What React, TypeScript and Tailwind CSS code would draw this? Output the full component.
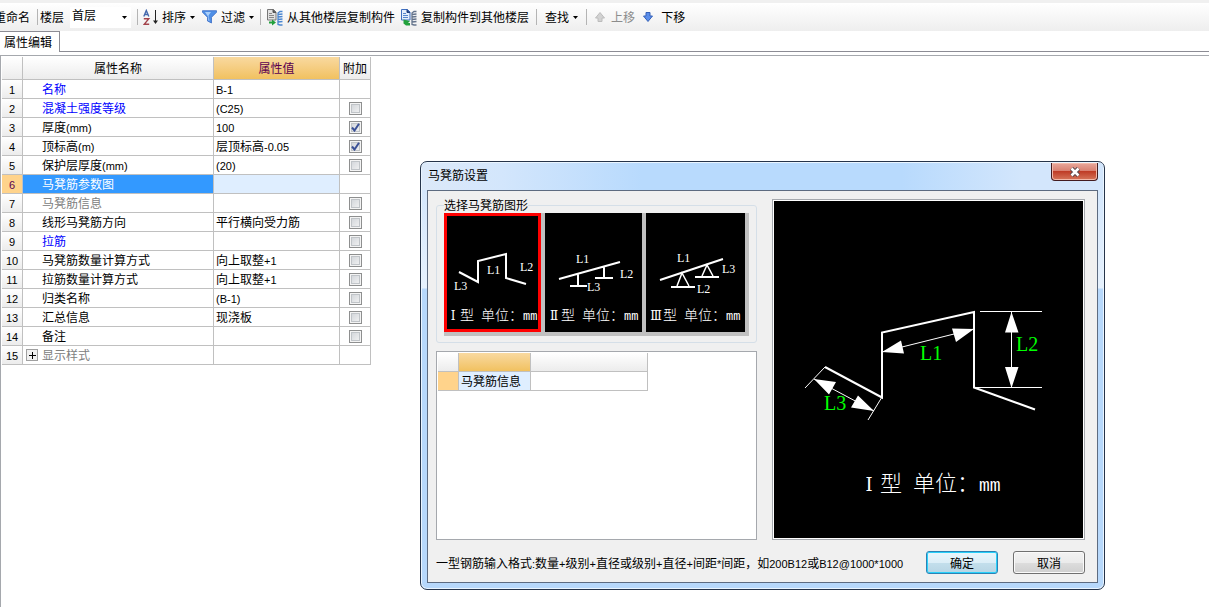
import { Fragment, type ReactNode } from 'react';
import clsx from 'clsx';

interface PropertyRow {
  name: string;
  value?: string;
  tone?: 'key' | 'muted' | 'selected';
  extra?: boolean; // undefined: no check box
  expandable?: boolean;
}

const ROWS: PropertyRow[] = [
  { name: '名称', value: 'B-1', tone: 'key' },
  { name: '混凝土强度等级', value: '(C25)', tone: 'key', extra: false },
  { name: '厚度(mm)', value: '100', extra: true },
  { name: '顶标高(m)', value: '层顶标高-0.05', extra: true },
  { name: '保护层厚度(mm)', value: '(20)', extra: false },
  { name: '马凳筋参数图', tone: 'selected' },
  { name: '马凳筋信息', tone: 'muted', extra: false },
  { name: '线形马凳筋方向', value: '平行横向受力筋', extra: false },
  { name: '拉筋', tone: 'key', extra: false },
  { name: '马凳筋数量计算方式', value: '向上取整+1', extra: false },
  { name: '拉筋数量计算方式', value: '向上取整+1', extra: false },
  { name: '归类名称', value: '(B-1)', extra: false },
  { name: '汇总信息', value: '现浇板', extra: false },
  { name: '备注', extra: false },
  { name: '显示样式', tone: 'muted', expandable: true },
];

// Latin runs are set a little smaller than the Chinese around them
function Mixed({ text }: { text: string }) {
  return (
    <>
      {text.split(/([\x21-\x7e]+)/).map((part, i) =>
        i % 2 ? (
          <span key={i} className="font-['Liberation_Sans',sans-serif] text-[11px] leading-none">
            {part}
          </span>
        ) : (
          <Fragment key={i}>{part}</Fragment>
        ),
      )}
    </>
  );
}

function Caret() {
  return (
    <svg width="5" height="3" viewBox="0 0 5 3" aria-hidden="true">
      <path d="M0 0h5L2.5 3z" fill="#000" />
    </svg>
  );
}

function Separator() {
  return <span className="h-4 w-px bg-[#b4b4b4]" />;
}

function SortIcon() {
  return (
    <svg width="15" height="17" viewBox="0 0 15 17" fill="none" aria-hidden="true">
      <path d="M.8 7.500 3.300 1.500 5.800 7.500M1.500 5.500h3.600" stroke="#4569ad" strokeWidth="1.400" />
      <path d="M.8 9.700h5L1.200 15.300h5" stroke="#a3434b" strokeWidth="1.400" />
      <path d="M12.500 1v12" stroke="#222" />
      <path d="M10 11.500h5l-2.500 3.500z" fill="#222" />
    </svg>
  );
}

function FilterIcon() {
  return (
    <svg width="15" height="14" viewBox="0 0 15 14" aria-hidden="true">
      <path d="M.5.7h14v1.600L9.500 7.300V13L5.500 11V7.300L.5 2.300z" fill="#4f8fe6" stroke="#3a6cc4" strokeWidth=".8" />
      <path d="M3 2h6L6.500 5.500 7.500 11 6.300 10.500V7z" fill="#a9cffa" />
    </svg>
  );
}

function CopyIcon({ variant }: { variant: 'from' | 'to' }) {
  const from = variant === 'from';
  return (
    <svg width="16" height="17" viewBox="0 0 16 17" fill="none" aria-hidden="true">
      <path d="M.5.500h6l2.500 2.500v8h-8.500z" fill={from ? '#e2e2e2' : '#e4eefc'} stroke={from ? '#777' : '#3f6fc0'} />
      <path d="M6 .500v3h3" fill={from ? '#555' : '#1f3f80'} stroke={from ? '#555' : '#1f3f80'} />
      <path d="M2 4.500h3M2 6.500h5M2 8.500h5" stroke={from ? '#888' : '#5585cc'} />
      <path
        d="M15.500 2.500H13l-2 1.500v11.500l2 .500h2.500M11 5.500l4.500-.500M11 8l4.500-.500M11 10.500l4.500-.500M11 13l4.500-.500"
        stroke={from ? '#4a86d0' : '#64748c'}
        strokeWidth="1.300"
      />
      <path d={from ? 'M2 12.500h3V10.500l4 3-4 3v-2H2z' : 'M2.500 10.500v4l2.500 2h4v-2.500H7l2-2z'} fill="#22a03c" />
    </svg>
  );
}

function MoveIcon({ down }: { down?: boolean }) {
  return (
    <svg width="10" height="10" viewBox="0 0 10 10" aria-hidden="true">
      {down ? (
        <path d="M3 .5h4V4h2.500L5 9.500.5 4H3z" fill="#5b8eea" stroke="#3561b8" />
      ) : (
        <path d="M3 9.500h4V6h2.500L5 .5.5 6H3z" fill="#d2d2d2" stroke="#bcbcbc" />
      )}
    </svg>
  );
}

function ToolButton({ children, disabled }: { children: ReactNode; disabled?: boolean }) {
  return (
    <button
      type="button"
      disabled={disabled}
      className="flex shrink-0 items-center gap-1 whitespace-nowrap disabled:text-[#8c8c8c]"
    >
      {children}
    </button>
  );
}

function Toolbar() {
  return (
    <header className="flex h-[31px] items-center border-t-3 border-[#f0f0f0] bg-linear-to-b from-white to-[#eeeeee]">
      <div className="-ml-1.5 flex items-center gap-[7px]">
        <ToolButton>重命名</ToolButton>
        <Separator />
      </div>
      <label htmlFor="floor" className="ml-0.5 shrink-0">
        楼层
      </label>
      <div className="relative mr-1.5 ml-1.5 shrink-0">
        <select id="floor" className="h-[21px] w-[61px] appearance-none bg-white pb-1 pl-0.5 leading-4">
          <option>首层</option>
        </select>
        <span className="pointer-events-none absolute top-[9px] right-1">
          <Caret />
        </span>
      </div>
      <div className="flex items-center gap-[5px]">
        <Separator />
        <ToolButton>
          <SortIcon />
          排序
          <Caret />
        </ToolButton>
      </div>
      <div className="ml-[7px] flex items-center gap-1.5">
        <ToolButton>
          <FilterIcon />
          过滤
          <Caret />
        </ToolButton>
        <Separator />
        <ToolButton>
          <CopyIcon variant="from" />
          从其他楼层复制构件
        </ToolButton>
        <ToolButton>
          <CopyIcon variant="to" />
          复制构件到其他楼层
        </ToolButton>
      </div>
      <div className="ml-[7px] flex items-center gap-2">
        <Separator />
        <ToolButton>
          查找
          <Caret />
        </ToolButton>
        <Separator />
        <ToolButton disabled>
          <MoveIcon />
          <span className="ml-0.5">上移</span>
        </ToolButton>
        <ToolButton>
          <MoveIcon down />
          <span className="ml-1">下移</span>
        </ToolButton>
      </div>
    </header>
  );
}

function CheckBox({ label, checked }: { label: string; checked: boolean }) {
  return (
    <span className="grid place-items-center">
      <input
        type="checkbox"
        aria-label={label}
        defaultChecked={checked}
        className="peer col-start-1 row-start-1 size-[13px] appearance-none border border-[#8e8f8f] bg-linear-to-br from-[#cdd1d6] to-[#f6f6f6] shadow-[inset_0_0_0_1px_#f4f4f4,inset_0_0_0_2px_#c0c4c8]"
      />
      <svg
        width="9"
        height="9"
        viewBox="0 0 9 9"
        className="pointer-events-none col-start-1 row-start-1 hidden peer-checked:block"
      >
        <path d="M1 4.500 3.500 7.500 8 .8" fill="none" stroke="#3b5196" strokeWidth="2" />
      </svg>
    </span>
  );
}

const CELL = 'border-r border-b border-[#c0c0c0] p-0';
const HEAD = 'bg-linear-to-b from-white to-[#ececec] font-normal';
const HEAD_ACTIVE = 'bg-linear-to-b from-[#f9d99f] to-[#f1c15f] font-normal';

function PropertyTable() {
  return (
    <table className="w-[369px] table-fixed border-separate border-spacing-0">
      <colgroup>
        <col className="w-[21px]" />
        <col className="w-[191px]" />
        <col className="w-[126px]" />
        <col className="w-[31px]" />
      </colgroup>
      <thead>
        <tr className="h-[23px]">
          <th className={clsx(CELL, HEAD)} />
          <th className={clsx(CELL, HEAD)}>属性名称</th>
          <th className={clsx(CELL, HEAD_ACTIVE, 'text-[#5a0050]')}>属性值</th>
          <th className={clsx(CELL, HEAD)}>附加</th>
        </tr>
      </thead>
      <tbody>
        {ROWS.map((row, i) => {
          const selected = row.tone === 'selected';
          return (
            <tr key={row.name} className="h-[19px]">
              <th
                scope="row"
                className={clsx(CELL, selected ? 'bg-[#ffd38b] font-normal text-[#5a0050]' : HEAD)}
              >
                <Mixed text={String(i + 1)} />
              </th>
              <td
                className={clsx(CELL, {
                  'text-[#0000ff]': row.tone === 'key',
                  'text-[#808080]': row.tone === 'muted',
                  'bg-[#3399ff] text-white': selected,
                })}
              >
                <div className={clsx('flex items-center', row.expandable ? 'gap-1 pl-[3px]' : 'pl-[19px]')}>
                  {row.expandable && (
                    <button
                      type="button"
                      aria-label="展开"
                      className="grid size-3 place-items-center border border-[#a0a0a0] bg-[#f0f0f0]"
                    >
                      <svg width="7" height="7" viewBox="0 0 7 7">
                        <path d="M0 3.500h7M3.500 0v7" stroke="#000" />
                      </svg>
                    </button>
                  )}
                  <span>
                    <Mixed text={row.name} />
                  </span>
                </div>
              </td>
              <td className={clsx(CELL, 'pl-0.5', selected && 'bg-[#dfeeff]')}>
                <Mixed text={row.value ?? ''} />
              </td>
              <td className={CELL}>
                {row.extra !== undefined && <CheckBox label={`附加 ${row.name}`} checked={row.extra} />}
              </td>
            </tr>
          );
        })}
      </tbody>
    </table>
  );
}

interface ShapeProps {
  label: string;
  numeral: string;
  viewBox: string;
  width: number;
  captionX: number;
  selected?: boolean;
  children: ReactNode;
}

function ShapeButton({ label, numeral, viewBox, width, captionX, selected, children }: ShapeProps) {
  return (
    <button
      type="button"
      aria-label={label}
      aria-pressed={!!selected}
      className={clsx('border-3 bg-black', selected ? 'border-[#ff0000]' : 'border-black')}
    >
      <svg width={width} height="113" viewBox={viewBox} className="overflow-visible" fill="none" stroke="#fff" strokeWidth="2">
        {children}
        <text
          x={captionX + 7}
          y="107"
          fill="#fff"
          stroke="none"
          textAnchor="middle"
          className="font-['DejaVu_Serif',serif] text-xs"
        >
          {numeral}
        </text>
        <text
          x={captionX + 14}
          y="107"
          fill="#fff"
          stroke="none"
          className="font-['Noto_Sans_CJK_SC',sans-serif] text-sm font-light"
        >
          型
          <tspan x={captionX + 35}>单位：</tspan>
          <tspan x={captionX + 77} className="font-['Liberation_Mono',monospace] text-xs">
            mm
          </tspan>
        </text>
      </svg>
    </button>
  );
}

function ShapeLabel({ x, y, children }: { x: number; y: number; children: ReactNode }) {
  return (
    <text x={x} y={y} fill="#fff" stroke="none" className="font-['Liberation_Serif',serif] text-xs">
      {children}
    </text>
  );
}

function ShapePicker() {
  return (
    <fieldset className="min-w-0 rounded-[3px] border border-[#d5dfe8] px-[7px] pb-1.5">
      <legend className="h-4 leading-4">选择马凳筋图形</legend>
      <div className="flex h-[123px] items-start gap-1 bg-[#c0c0c0]">
        <ShapeButton label="Ⅰ型" numeral="Ⅰ" width={91} viewBox="3 3 91 113" captionX={2} selected>
          <path d="M15 59 34 69V48l28-7v24l20 6" />
          <ShapeLabel x={43} y={61}>L1</ShapeLabel>
          <ShapeLabel x={76} y={58}>L2</ShapeLabel>
          <ShapeLabel x={10} y={77}>L3</ShapeLabel>
        </ShapeButton>
        <ShapeButton label="Ⅱ型" numeral="Ⅱ" width={91} viewBox="3 3 91 113" captionX={2}>
          <path d="M14 66 75 49M33 61v12M25 73h17M59 54v11M50 65h18" />
          <ShapeLabel x={31} y={50}>L1</ShapeLabel>
          <ShapeLabel x={75} y={65}>L2</ShapeLabel>
          <ShapeLabel x={42} y={78}>L3</ShapeLabel>
        </ShapeButton>
        <ShapeButton label="Ⅲ型" numeral="Ⅲ" width={93} viewBox="3 3 93 113" captionX={3}>
          <path d="M14 67 77 46M25 74h24M49 64h24" />
          <path d="M31 73 36 60 43 73M56 63 61 52 67 63" strokeWidth="1.500" />
          <ShapeLabel x={31} y={49}>L1</ShapeLabel>
          <ShapeLabel x={51} y={80}>L2</ShapeLabel>
          <ShapeLabel x={76} y={60}>L3</ShapeLabel>
        </ShapeButton>
      </div>
    </fieldset>
  );
}

function InfoTable() {
  return (
    <div className="mt-2 flex-1 border border-[#a5a8ad] bg-white p-px">
      <table className="w-[210px] table-fixed border-separate border-spacing-0">
        <colgroup>
          <col className="w-[21px]" />
          <col className="w-[72px]" />
          <col className="w-[117px]" />
        </colgroup>
        <thead>
          <tr className="h-[19px]">
            <th className={clsx(CELL, HEAD)} />
            <th className={clsx(CELL, HEAD_ACTIVE)} />
            <th className={clsx(CELL, HEAD)} />
          </tr>
        </thead>
        <tbody>
          <tr className="h-[19px]">
            <th className={clsx(CELL, 'bg-[#ffd38b]')} />
            <td className={clsx(CELL, 'bg-[#dfeeff] pl-0.5')}>马凳筋信息</td>
            <td className={CELL} />
          </tr>
        </tbody>
      </table>
    </div>
  );
}

function Preview() {
  return (
    <div className="mt-0.5 border border-[#a5a8ad] bg-white p-px">
      <svg width="309" height="337" viewBox="0 0 309 337" className="block bg-black" fill="none" stroke="#fff">
        <path d="M51 166 108 196.500V131.500L200 111V186.500L261 208.500" strokeWidth="2" />
        <path d="M51 166 31 187M108 196 94 219M206 110.500h62M200 186.500h68M237.500 111v75M108 151 200 128M40 178 100 210" />
        <g fill="#fff" stroke="none">
          <path d="M108 151 127 139.500 130 152.500zM200 128 178 127.500 182 141zM237.500 111 231 131.500h13.500zM237.500 187 231 166h13.500z" />
          <path d="M40 178 62 181 55 193.500zM100 210 84 194.500 77 206.500z" />
        </g>
        <g fill="#00ff00" stroke="none" className="font-['Liberation_Serif',serif] text-xl">
          <text x="146" y="159">L1</text>
          <text x="242" y="150">L2</text>
          <text x="50" y="209">L3</text>
        </g>
        <text x="95" y="290" fill="#fff" stroke="none" textAnchor="middle" className="font-['DejaVu_Serif',serif] text-lg">
          Ⅰ
        </text>
        <text x="106" y="290" fill="#fff" stroke="none" className="font-['Noto_Sans_CJK_SC',sans-serif] text-[22px] font-light">
          型
          <tspan x="139">单位：</tspan>
          <tspan x="205" className="font-['Liberation_Mono',monospace] text-lg">mm</tspan>
        </text>
      </svg>
    </div>
  );
}

function SettingsDialog() {
  return (
    <div
      role="dialog"
      aria-labelledby="dialog-title"
      className="absolute top-[161px] left-[420px] w-[685px] overflow-hidden rounded-[7px] border border-[#26344a] bg-[linear-gradient(to_bottom,#cfe4fc_0,#e6f1fd_126px,#b7d8fb_127px)] shadow-[inset_0_0_0_1px_#eaf5ff]"
    >
      <div className="mx-px mt-px flex h-[27px] items-start justify-between bg-[linear-gradient(to_right,#dce9f9_0,#d3e6fc_80px,#b8dafd_220px,#b8dafd_480px,#d3e6fc_600px)] pr-[5px] pl-1.5">
        <h2 id="dialog-title" className="pt-1 leading-4">
          马凳筋设置
        </h2>
        <button
          type="button"
          aria-label="关闭"
          className="grid h-[18px] w-[47px] place-items-center rounded-b-[4px] border border-t-0 border-[#431c20] bg-[linear-gradient(to_bottom,#e8a79b_0,#d98172_45%,#bf3c26_50%,#d6765b)] shadow-[inset_0_0_0_1px_#f2b9aa]"
        >
          <svg width="12" height="10" viewBox="0 0 12 10" fill="none">
            <path d="m2.500 1.500 7 7m0-7-7 7" stroke="#55474c" strokeWidth="4.500" />
            <path d="m2.500 1.500 7 7m0-7-7 7" stroke="#fff" strokeWidth="2.500" />
          </svg>
        </button>
      </div>
      <div className="mx-1.5 mb-1.5 border border-[#5d6b80] bg-[#f0f0f0] pt-1.5 pr-3 pb-2 pl-2">
        <div className="flex gap-[15px]">
          <div className="flex flex-1 flex-col">
            <ShapePicker />
            <InfoTable />
          </div>
          <Preview />
        </div>
        <div className="mt-[11px] flex items-center">
          <p className="flex-1 whitespace-nowrap">
            <Mixed text="一型钢筋输入格式:数量+级别+直径或级别+直径+间距*间距，如200B12或B12@1000*1000" />
          </p>
          <button
            type="button"
            className="mr-[15px] h-[23px] w-[72px] rounded-[3px] border border-[#2c83b5] bg-[linear-gradient(to_bottom,#eaf6fc_0,#dceef7_50%,#c3dfec_51%,#b7d5e4)] leading-none shadow-[inset_0_0_0_1px_#29d0fa]"
          >
            确定
          </button>
          <button
            type="button"
            className="h-[23px] w-[72px] rounded-[3px] border border-[#707070] bg-[linear-gradient(to_bottom,#f2f2f2_0,#ebebeb_50%,#dddddd_51%,#cfcfcf)] leading-none shadow-[inset_0_0_0_1px_#fafafa]"
          >
            取消
          </button>
        </div>
      </div>
    </div>
  );
}

export default function App() {
  return (
    <div className="relative flex min-h-screen flex-col overflow-hidden bg-white font-['Noto_Sans_CJK_SC',sans-serif] text-xs leading-4 text-black">
      <Toolbar />
      <div role="tablist" className="flex h-[21px]">
        <button
          type="button"
          role="tab"
          aria-selected="true"
          className="w-[60px] border-t border-r border-[#8c8c94] pl-1 text-left"
        >
          属性编辑
        </button>
        <span className="flex-1 border-b border-[#8c8c94]" />
      </div>
      <main className="mt-[3px] flex-1 border-t border-l border-[#a5a8ad] pt-px pl-px">
        <PropertyTable />
      </main>
      <SettingsDialog />
    </div>
  );
}
